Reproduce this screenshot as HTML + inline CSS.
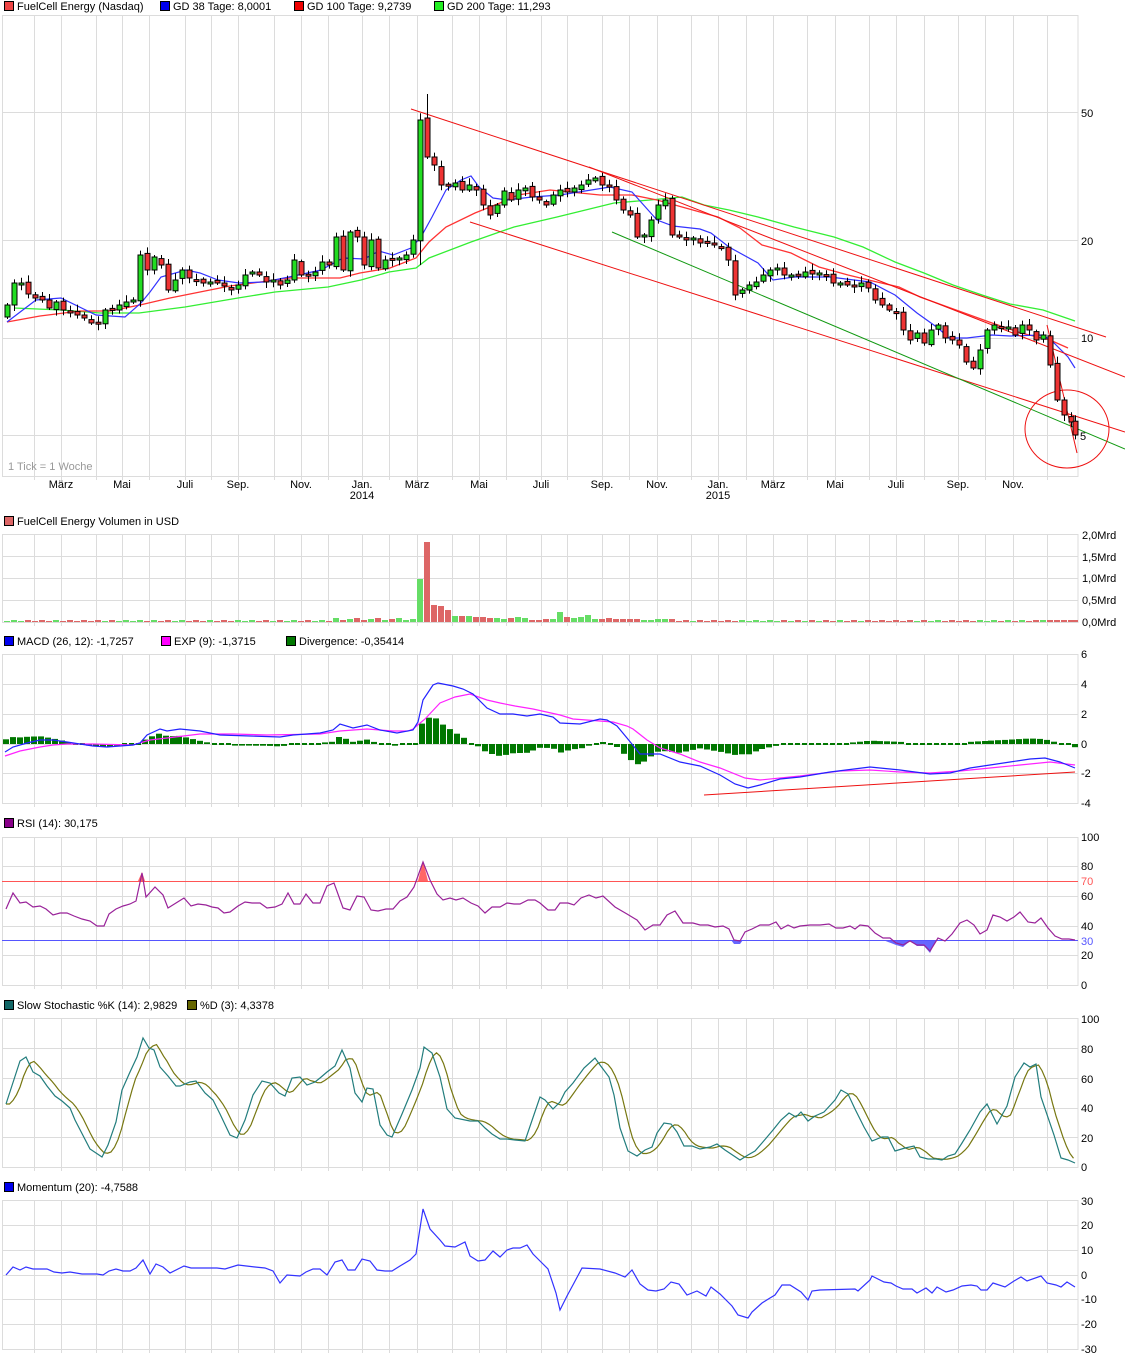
<!DOCTYPE html>
<html><head><meta charset="utf-8">
<style>
html,body{margin:0;padding:0;background:#fff;}
svg{display:block;font-family:"Liberation Sans",Arial,sans-serif;font-size:11px;}
</style></head>
<body>
<svg id="c" width="1125" height="1361" viewBox="0 0 1125 1361" xmlns="http://www.w3.org/2000/svg"></svg>
<script>
var S=document.getElementById('c');var out=[];
function add(s){out.push(s);}
function pl(p,col,w){add('<polyline fill="none" stroke="'+col+'" stroke-width="'+(w||1)+'" points="'+p.map(function(a){return a[0]+','+a[1]}).join(' ')+'"/>');}
function ln(x1,y1,x2,y2,col,w){add('<line x1="'+x1+'" y1="'+y1+'" x2="'+x2+'" y2="'+y2+'" stroke="'+col+'" stroke-width="'+(w||1)+'"/>');}
function tx(x,y,t,col,anch){add('<text x="'+x+'" y="'+y+'" fill="'+(col||'#000')+'"'+(anch?' text-anchor="'+anch+'"':'')+'>'+t+'</text>');}
function interp(p,x){if(x<=p[0][0])return p[0][1];for(var i=1;i<p.length;i++){if(x<=p[i][0]){var a=p[i-1],b=p[i];return a[1]+(b[1]-a[1])*(x-a[0])/(b[0]-a[0]);}}return p[p.length-1][1];}
var G=[34,61,96,122,149,185,211,238,274,301,328,362,389,417,452,479,506,541,567,602,629,657,691,718,746,773,807,835,869,896,924,958,985,1013,1047];
var GC='#dcdcdc';
function panel(top,bot,hl){
  G.forEach(function(x){ln(x+.5,top,x+.5,bot+4,GC);});
  hl.forEach(function(y){ln(2,y+.5,1078,y+.5,GC);});
  add('<rect x="2.5" y="'+(top+.5)+'" width="1075.5" height="'+(bot-top)+'" fill="none" stroke="'+GC+'"/>');
}
function leg(y,items){items.forEach(function(it){add('<rect x="'+(it[0]+.5)+'" y="'+(y-8.5)+'" width="9" height="9" fill="'+it[1]+'" stroke="#000"/>');tx(it[0]+13,y,it[2]);});}

/* ===== MAIN ===== */
panel(15,476,[112,240,338,435]);
leg(10,[[4,'#ee4444','FuelCell Energy (Nasdaq)'],[160,'#0000ee','GD 38 Tage: 8,0001'],[294,'#ee0000','GD 100 Tage: 9,2739'],[434,'#22ee22','GD 200 Tage: 11,293']]);
tx(1081,117,'50');tx(1081,245,'20');tx(1081,342,'10');tx(1080,440,'5');
tx(8,470,'1 Tick = 1 Woche','#999');
var ML=[[61,'März'],[122,'Mai'],[185,'Juli'],[238,'Sep.'],[301,'Nov.'],[362,'Jan.'],[417,'März'],[479,'Mai'],[541,'Juli'],[602,'Sep.'],[657,'Nov.'],[718,'Jan.'],[773,'März'],[835,'Mai'],[896,'Juli'],[958,'Sep.'],[1013,'Nov.']];
ML.forEach(function(m){tx(m[0],488,m[1],'#000','middle');});
tx(362,499,'2014','#000','middle');tx(718,499,'2015','#000','middle');

var green=[[14,308],[61,310],[100,313],[139,313],[185,307],[238,298],[275,292],[328,287],[361,280],[389,272],[416,268],[429,258],[471,242],[514,227],[557,217],[614,203],[650,200],[682,197],[704,205],[729,210],[758,217],[794,227],[834,237],[863,247],[895,262],[924,273],[953,285],[982,295],[1010,304],[1043,310],[1075,321]];
var red=[[7,322],[40,316],[80,311],[110,311],[140,305],[170,298],[200,292],[230,286],[260,282],[290,278],[340,278],[360,273],[390,268],[416,258],[429,242],[446,227],[475,213],[500,203],[518,195],[550,190],[600,195],[632,195],[657,200],[682,207],[718,217],[740,228],[762,245],[791,253],[819,267],[848,275],[877,282],[899,287],[920,297],[956,310],[992,323],[1021,333],[1050,340],[1068,348]];
var blue=[[7,322],[36,300],[61,298],[96,315],[125,317],[141,303],[150,292],[161,277],[186,270],[200,273],[218,280],[239,283],[264,282],[289,277],[321,270],[343,258],[364,259],[379,251],[393,255],[411,248],[421,237],[432,217],[446,190],[461,180],[471,176],[479,187],[493,198],[507,200],[532,197],[560,195],[610,187],[632,192],[657,220],[673,226],[700,229],[711,233],[729,247],[758,263],[773,280],[794,277],[830,277],[870,282],[895,295],[917,313],[938,328],[949,338],[967,338],[992,335],[1010,336],[1043,335],[1054,343],[1068,357],[1075,368]];
pl(green,'#33ee33',1.3);pl(red,'#ff3333',1.3);pl(blue,'#3333ff',1.2);
ln(411,109,1106,337,'#ee1111');ln(589,167,1125,377,'#ee1111');ln(470,222,1125,432,'#ee1111');ln(612,232,1125,449,'#119911');ln(1047,325,1077,453,'#ee1111');
add('<ellipse cx="1067" cy="429" rx="42" ry="39" fill="none" stroke="#ee1111"/>');

var K=[[7,305],[14,283],[21,283],[28,294],[35,298],[42,300],[49,308],[56,302],[63,310],[70,313],[77,315],[84,318],[91,323],[98,323],[105,310],[112,310],[119,305],[126,302],[133,300],[140,255],[147,270],[154,257],[161,265],[168,290],[175,280],[182,270],[189,278],[196,280],[203,283],[210,282],[217,283],[224,286],[231,290],[238,285],[245,275],[252,272],[259,275],[266,282],[273,280],[280,285],[287,280],[294,260],[301,275],[308,275],[315,272],[322,262],[329,265],[336,237],[343,270],[350,232],[357,237],[364,265],[371,240],[378,268],[385,260],[392,260],[399,258],[406,255],[413,240],[420,120],[427,157],[434,165],[441,185],[448,186],[455,183],[462,190],[469,185],[476,190],[483,205],[490,215],[497,205],[504,191],[511,200],[518,190],[525,188],[532,197],[539,200],[546,205],[553,195],[560,190],[567,192],[574,188],[581,185],[588,180],[595,178],[602,185],[609,185],[616,200],[623,210],[630,215],[637,237],[644,235],[651,220],[658,205],[665,200],[672,235],[679,236],[686,240],[693,238],[700,243],[707,243],[714,245],[721,248],[728,260],[735,295],[742,290],[749,285],[756,282],[763,275],[770,270],[777,268],[784,275],[791,275],[798,276],[805,272],[812,274],[819,273],[826,275],[833,283],[840,283],[847,285],[854,285],[861,283],[868,288],[875,300],[882,305],[889,310],[896,313],[903,330],[910,340],[917,333],[924,343],[931,330],[938,325],[945,338],[952,340],[959,345],[966,362],[973,368],[980,350],[987,330],[994,325],[1001,328],[1008,327],[1015,335],[1022,325],[1029,330],[1036,340],[1043,335],[1050,365],[1057,400],[1064,415],[1071,422],[1075,435]];
var dirs=[];
K.forEach(function(k,i){
  var x=k[0],c=k[1],o=i?K[i-1][1]+((i*7)%5-2)*0.8:c+12;
  if(x==427)o=118;
  var up=c<o;dirs.push(up);
  var t=Math.min(o,c),b=Math.max(o,c);if(b-t<2){b=t+2;}
  var n=(i*37)%7;
  var hi=t-2-n*0.8,lo=b+2+((i*53)%6)*0.8;
  if(x==427)hi=94;if(x==420)lo=265;
  ln(x+.5,hi,x+.5,lo,'#000');
  add('<rect x="'+(x-2)+'" y="'+t+'" width="5" height="'+(b-t)+'" fill="'+(up?'#22dd22':'#ee3333')+'" stroke="#000"/>');
});

/* ===== VOLUME ===== */
panel(534,622,[556,578,600]);
leg(525,[[4,'#dd6666','FuelCell Energy Volumen in USD']]);
[['2,0Mrd',539],['1,5Mrd',561],['1,0Mrd',582],['0,5Mrd',604],['0,0Mrd',626]].forEach(function(a){tx(1082,a[1],a[0]);});
var VS={420:43,427:80,434:17,441:16,448:12,455:6,462:6,469:6,476:5,483:5,490:4,497:4,504:3,511:4,518:5,525:4,532:2,539:2,546:3,553:3,560:10,567:5,574:4,581:5,588:7,595:3,602:3,609:4,616:3,623:3,630:3,637:3,644:2,651:2,658:3,665:3,672:3};
K.forEach(function(k,i){
  var x=k[0];var h=VS[x];
  if(h===undefined){h=(x>330&&x<415)?2+(i%3):1+(i%2);if(x>1040)h=2;}
  add('<rect x="'+(x-3)+'" y="'+(622-h)+'" width="6" height="'+h+'" fill="'+(dirs[i]?'#66dd66':'#dd6666')+'"/>');
});

/* ===== MACD ===== */
panel(654,803,[684,714,744,773]);
leg(645,[[4,'#0000ee','MACD (26, 12): -1,7257'],[161,'#ff00ff','EXP (9): -1,3715'],[286,'#007700','Divergence: -0,35414']]);
[['6',658],['4',688],['2',718],['0',748],['-2',777],['-4',807]].forEach(function(a){tx(1081,a[1],a[0]);});
var mb=[[5,752],[13,747],[27,743],[40,740],[53,740],[67,742],[80,744],[93,746],[107,747],[120,746],[133,745],[140,743],[147,735],[160,729],[167,731],[180,729],[200,731],[220,735],[250,736],[280,737],[293,735],[320,733],[333,730],[340,724],[353,728],[367,725],[380,730],[397,733],[413,730],[418,722],[423,700],[433,685],[438,683],[453,686],[463,689],[473,694],[487,708],[500,714],[513,714],[527,716],[540,714],[553,717],[560,723],[580,724],[600,719],[607,720],[617,726],[627,738],[640,754],[660,754],[680,762],[700,766],[720,775],[735,784],[748,788],[760,785],[780,779],[800,777],[830,772],[870,767],[900,770],[930,774],[950,773],[970,768],[990,765],[1010,762],[1030,759],[1045,758],[1060,762],[1075,768]];
var mm=[[5,756],[20,751],[40,747],[53,745],[67,744],[93,744],[133,745],[150,740],[167,738],[200,734],[233,734],[267,735],[320,734],[340,731],[367,729],[393,731],[408,731],[413,729],[425,719],[440,703],[455,697],[470,694],[487,700],[500,703],[515,706],[533,709],[560,715],[573,719],[600,721],[613,722],[627,726],[633,729],[647,740],[660,748],[680,754],[700,762],[720,768],[745,778],[760,780],[800,776],[840,771],[870,770],[900,772],[930,773],[960,771],[990,768],[1020,765],[1050,762],[1075,765]];
for(var x=6;x<=1075;x+=6.94){
  var v=(interp(mm,x)-interp(mb,x))*1.1;var xr=Math.round(x);
  if(Math.abs(v)<1.5){add('<rect x="'+(xr-2)+'" y="743" width="5" height="2" fill="#007700"/>');}
  else if(v>0)add('<rect x="'+(xr-3)+'" y="'+(744-v).toFixed(1)+'" width="6" height="'+v.toFixed(1)+'" fill="#007700"/>');
  else add('<rect x="'+(xr-3)+'" y="744" width="6" height="'+(-v).toFixed(1)+'" fill="#007700"/>');
}
pl(mm,'#ff22ff',1.2);pl(mb,'#2222ff',1.2);
ln(704,795,1075,772,'#ee1111');

/* ===== RSI ===== */
panel(837,985,[866,896,926,955]);
leg(827,[[4,'#880088','RSI (14): 30,175']]);
[['100',841],['80',870],['60',900],['40',930],['20',959],['0',989]].forEach(function(a){tx(1081,a[1],a[0]);});
tx(1081,885,'70','#ff5555');tx(1081,945,'30','#5555ff');
var rsi=[[6,909],[13,893],[20,903],[26,902],[33,907],[40,906],[46,909],[53,915],[60,913],[67,913],[74,916],[82,919],[90,921],[97,926],[104,926],[109,914],[116,909],[123,906],[130,904],[136,901],[142,873],[146,897],[155,887],[163,895],[168,908],[176,903],[184,898],[191,906],[198,904],[206,905],[212,907],[218,908],[224,913],[230,912],[238,906],[245,902],[252,903],[260,903],[267,908],[275,907],[282,904],[288,893],[294,904],[300,904],[306,894],[313,903],[320,903],[327,886],[334,883],[343,908],[350,910],[357,896],[364,897],[371,910],[378,911],[386,909],[393,909],[400,901],[407,897],[414,887],[423,862],[430,880],[437,894],[443,900],[450,898],[456,900],[463,898],[471,903],[478,906],[485,913],[492,907],[500,907],[507,903],[514,904],[520,904],[528,900],[535,900],[540,903],[548,910],[555,910],[560,903],[568,903],[574,905],[581,898],[589,895],[596,898],[603,896],[615,907],[627,914],[637,920],[645,930],[653,925],[660,925],[667,915],[675,911],[683,923],[693,923],[700,925],[708,925],[715,927],[723,926],[729,929],[734,940],[740,941],[745,932],[752,929],[760,925],[769,925],[776,922],[781,929],[788,925],[794,928],[800,926],[810,925],[820,925],[829,924],[836,928],[843,928],[850,926],[855,929],[860,925],[868,926],[875,933],[883,938],[890,938],[896,943],[903,945],[910,941],[917,945],[924,945],[930,951],[938,938],[945,941],[952,934],[960,923],[967,920],[974,925],[980,934],[987,930],[993,915],[1000,917],[1007,921],[1014,917],[1020,912],[1028,922],[1035,923],[1041,918],[1048,928],[1055,936],[1062,939],[1069,939],[1075,940]];
add('<polygon points="138,881 142,872 145,881" fill="#ff6666"/>');
add('<polygon points="418,881 423,861 428,881" fill="#ff6666"/>');
add('<polygon points="731,940 734,944 740,944 743,940" fill="#6666ff"/>');
add('<polygon points="883,940 896,945 903,947 910,941 917,946 924,946 930,953 936,940" fill="#6666ff"/>');
ln(2,881.5,1078,881.5,'#ff5555');ln(2,940.5,1078,940.5,'#5555ff');
pl(rsi,'#992299',1.2);

/* ===== STOCH ===== */
panel(1018,1167,[1048,1078,1108,1137]);
leg(1009,[[4,'#116666','Slow Stochastic %K (14): 2,9829'],[187,'#666600','%D (3): 4,3378']]);
[['100',1023],['80',1053],['60',1083],['40',1112],['20',1142],['0',1171]].forEach(function(a){tx(1081,a[1],a[0]);});
var sk=[[6,1104],[20,1061],[26,1057],[33,1072],[40,1076],[47,1086],[55,1096],[62,1101],[70,1108],[75,1120],[90,1149],[102,1157],[108,1145],[116,1122],[122,1090],[130,1072],[137,1057],[143,1038],[149,1048],[154,1050],[160,1067],[168,1076],[176,1086],[180,1086],[190,1082],[196,1081],[205,1093],[213,1100],[220,1114],[230,1135],[237,1138],[245,1120],[253,1095],[262,1081],[270,1083],[279,1093],[285,1096],[292,1078],[300,1077],[307,1085],[315,1082],[320,1078],[327,1072],[335,1066],[342,1050],[350,1068],[355,1093],[362,1102],[367,1088],[373,1089],[380,1125],[387,1135],[392,1137],[402,1114],[412,1090],[420,1068],[424,1047],[432,1053],[440,1077],[447,1109],[455,1118],[470,1121],[478,1121],[485,1128],[492,1134],[500,1139],[507,1139],[515,1140],[525,1141],[540,1097],[545,1100],[553,1109],[560,1102],[565,1092],[573,1083],[584,1068],[595,1058],[600,1065],[609,1077],[614,1095],[620,1128],[628,1151],[637,1156],[645,1150],[652,1147],[657,1133],[664,1123],[671,1124],[677,1132],[684,1146],[692,1146],[700,1149],[710,1147],[717,1144],[725,1150],[740,1160],[748,1155],[755,1151],[762,1143],[773,1130],[781,1120],[789,1113],[796,1117],[801,1112],[808,1121],[815,1116],[824,1112],[835,1100],[841,1090],[848,1094],[855,1109],[864,1127],[872,1141],[882,1137],[888,1137],[895,1151],[905,1148],[914,1146],[920,1157],[928,1159],[936,1159],[942,1160],[948,1156],[955,1154],[962,1143],[970,1130],[980,1112],[987,1104],[997,1124],[1007,1106],[1015,1077],[1024,1063],[1030,1067],[1036,1064],[1041,1097],[1054,1135],[1061,1158],[1068,1160],[1075,1163]];
var sd=[];for(var x=6;x<=1075;x+=3.5){var s=0;for(var j=0;j<3;j++)s+=interp(sk,x-3.5-j*5);sd.push([x.toFixed(1),(s/3).toFixed(1)]);}
pl(sd,'#777711',1.2);pl(sk,'#227d7d',1.2);

/* ===== MOMENTUM ===== */
panel(1200,1349,[1225,1250,1275,1299,1324]);
leg(1191,[[4,'#0000ee','Momentum (20): -4,7588']]);
[['30',1205],['20',1229],['10',1254],['0',1279],['-10',1303],['-20',1328],['-30',1353]].forEach(function(a){tx(1081,a[1],a[0]);});
var mo=[[6,1275],[13,1267],[20,1270],[26,1267],[33,1269],[47,1269],[54,1272],[62,1273],[70,1272],[82,1274],[97,1274],[103,1275],[109,1271],[116,1269],[123,1271],[130,1271],[136,1268],[143,1260],[150,1274],[156,1264],[163,1267],[170,1273],[184,1266],[191,1268],[205,1268],[217,1268],[225,1269],[238,1265],[255,1267],[265,1268],[273,1271],[280,1283],[287,1275],[300,1276],[306,1272],[313,1269],[320,1269],[327,1275],[335,1262],[342,1260],[348,1270],[355,1270],[362,1259],[370,1261],[377,1270],[385,1271],[392,1271],[400,1266],[410,1260],[416,1254],[423,1209],[430,1229],[440,1240],[445,1246],[455,1247],[465,1242],[470,1256],[478,1261],[485,1260],[493,1251],[500,1257],[507,1250],[513,1248],[520,1248],[527,1245],[533,1254],[540,1261],[548,1269],[556,1293],[560,1310],[567,1296],[574,1283],[582,1268],[600,1269],[615,1273],[625,1277],[632,1270],[640,1284],[648,1290],[656,1291],[664,1289],[671,1282],[679,1284],[687,1295],[697,1291],[706,1296],[711,1287],[720,1294],[732,1306],[738,1315],[748,1318],[752,1312],[762,1303],[770,1298],[775,1295],[782,1285],[790,1285],[801,1292],[808,1300],[812,1291],[820,1290],[855,1289],[858,1291],[870,1280],[872,1276],[884,1282],[891,1283],[896,1286],[903,1289],[912,1289],[917,1293],[926,1288],[932,1293],[937,1287],[946,1292],[953,1290],[962,1286],[971,1285],[977,1286],[981,1290],[987,1290],[993,1283],[1005,1287],[1014,1281],[1021,1277],[1027,1281],[1041,1276],[1047,1283],[1056,1285],[1061,1287],[1067,1282],[1075,1287]];
pl(mo,'#3333ff',1.2);

S.innerHTML=out.join('');
</script>
</body></html>
